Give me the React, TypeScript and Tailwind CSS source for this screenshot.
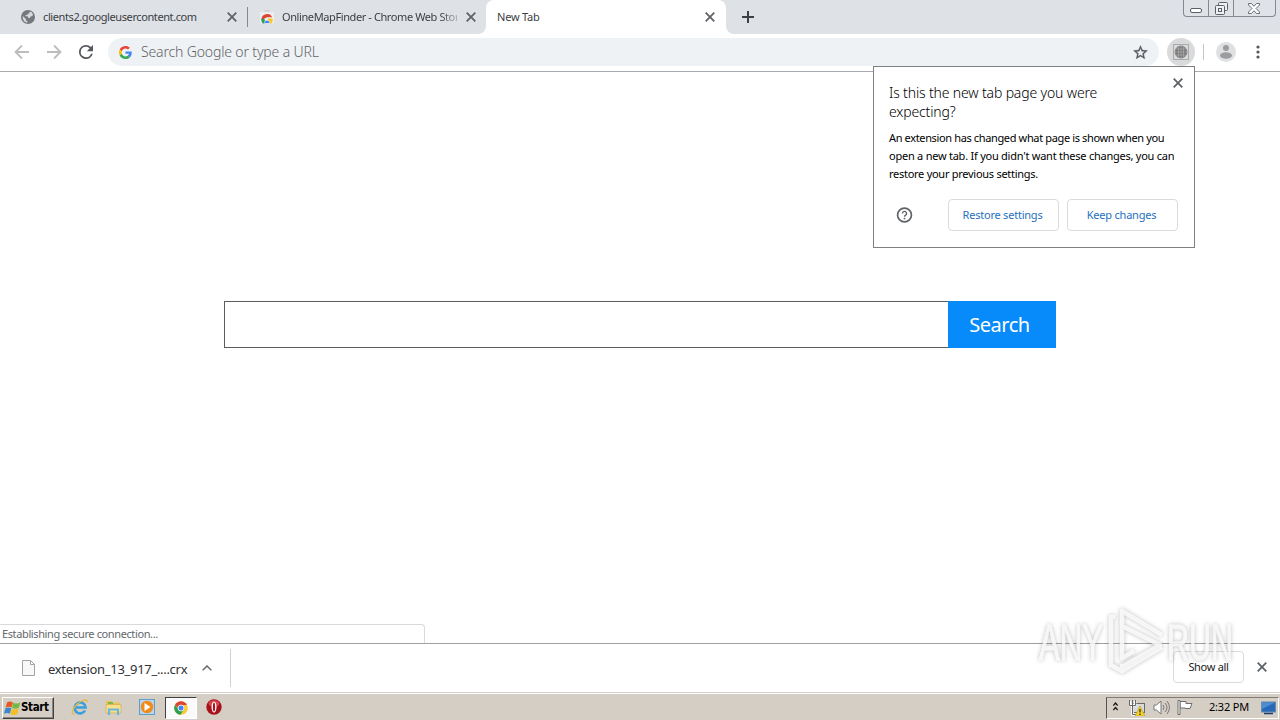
import type { ReactNode } from 'react';

const Cross = ({ className = '' }: { className?: string }) => (
  <svg viewBox="0 0 10 10" className={`h-[10px] w-[10px] shrink-0 ${className}`}>
    <path d="M.7.7l8.600 8.600M9.300.7L.7 9.300" stroke="currentColor" strokeWidth="1.8" fill="none" />
  </svg>
);

const GlobeIcon = () => (
  <svg viewBox="2 2 20 20" className="h-[14px] w-[14px] shrink-0">
    <circle cx="12" cy="12" r="10" fill="#75787c" />
    <path d="M4.500 10.500L9 15v1.500l2 1.500v2.300C7 19.500 4 16 4.500 10.500zM8.500 11V9h3V7h2.500V4.500l3 .5 2.500 4-3.500 2.500h-1v2h-2.500l-1-2.500z" fill="#d6d9de" />
  </svg>
);

const WebStoreIcon = () => (
  <svg viewBox="0 0 14 14" className="h-[14px] w-[14px] shrink-0">
    <path d="M5 2.500V.7h4v1.800" fill="none" stroke="#c9cbce" />
    <rect x="0" y="2" width="14" height="11.500" rx="1" fill="#eeeeee" />
    <path d="M1.500 10a5.600 5.600 0 0 1 10.700-2.700H7z" fill="#df4334" />
    <path d="M1.500 8.800c-.5 1.700.2 3.500 1.300 4.700h3L4.300 8.500z" fill="#2f9e50" />
    <path d="M8 8.500h4.500a5 5 0 0 1-1 5H8z" fill="#fbc526" />
    <path d="M4.500 13.500a2.600 2.600 0 1 1 5 0z" fill="#4285f4" stroke="#fff" strokeWidth=".6" />
  </svg>
);

const GoogleIcon = () => (
  <svg viewBox="0 0 48 48" className="h-[13px] w-[13px] shrink-0">
    <path fill="#EA4335" d="M24 9.5c3.54 0 6.71 1.22 9.21 3.6l6.85-6.85C35.9 2.38 30.47 0 24 0 14.62 0 6.51 5.38 2.56 13.22l7.98 6.19C12.43 13.72 17.74 9.5 24 9.5z" />
    <path fill="#4285F4" d="M46.98 24.55c0-1.57-.15-3.09-.38-4.55H24v9.02h12.94c-.58 2.96-2.26 5.48-4.78 7.18l7.73 6c4.51-4.18 7.09-10.36 7.09-17.65z" />
    <path fill="#FBBC05" d="M10.53 28.59c-.48-1.45-.76-2.99-.76-4.59s.27-3.14.76-4.59l-7.98-6.19C.92 16.46 0 20.12 0 24c0 3.88.92 7.54 2.56 10.78l7.97-6.19z" />
    <path fill="#34A853" d="M24 48c6.48 0 11.93-2.13 15.89-5.81l-7.73-6c-2.15 1.45-4.92 2.3-8.16 2.3-6.26 0-11.57-4.22-13.47-9.91l-7.98 6.19C6.51 42.62 14.62 48 24 48z" />
  </svg>
);

const TabStrip = () => (
  <div className="flex h-[34px] shrink-0 bg-[#dee1e6] text-[11px] text-[#3c4043]">
    <div className="flex w-[248px] items-center pl-[21px]">
      <GlobeIcon />
      <span className="ml-2 w-[184px] whitespace-nowrap tracking-[-0.4px]">clients2.googleusercontent.com</span>
      <Cross className="text-[#5f6368]" />
      <span className="ml-[10px] h-5 w-px shrink-0 bg-[#85888d]" />
    </div>
    <div className="flex w-[238px] items-center pl-3">
      <WebStoreIcon />
      <span className="ml-2 w-[175px] overflow-hidden whitespace-nowrap tracking-[-0.4px] [mask-image:linear-gradient(to_right,#000_158px,transparent_182px)]">
        OnlineMapFinder - Chrome Web Store
      </span>
      <Cross className="ml-[9px] text-[#5f6368]" />
    </div>
    <div className="relative flex w-[240px] items-center rounded-t-lg bg-white pl-[11px]">
      <svg viewBox="0 0 8 8" className="absolute bottom-0 -left-2 h-2 w-2"><path d="M8 0v8H0a8 8 0 0 0 8-8" fill="#fff" /></svg>
      <svg viewBox="0 0 8 8" className="absolute -right-2 bottom-0 h-2 w-2"><path d="M0 0v8h8a8 8 0 0 1-8-8" fill="#fff" /></svg>
      <span className="w-[208px] tracking-[-0.2px]">New Tab</span>
      <Cross className="text-[#5f6368]" />
    </div>
    <div className="flex flex-1 items-center pl-4">
      <svg viewBox="0 0 12 12" className="h-3 w-3"><path d="M6 0v12M0 6h12" stroke="#3c4043" strokeWidth="2" /></svg>
    </div>
    <div className="mr-1 flex h-[17px] w-[93px] rounded-b-[4px] border border-t-0 border-[#84888f] bg-[#dfe2e7]">
      <div className="flex w-[25px] items-end justify-center border-r border-[#84888f] pb-[3px]">
        <span className="h-[5px] w-3 rounded-[2px] border border-[#5c6066] bg-white" />
      </div>
      <div className="flex w-[25px] items-center justify-center border-r border-[#84888f]">
        <svg viewBox="0 0 13 13" className="h-[13px] w-[13px]" fill="#eef0f2" stroke="#5c6066">
          <rect x="3.500" y=".5" width="9" height="8" rx="1" />
          <rect x=".5" y="3.500" width="9" height="9" rx="1" />
          <rect x="3.500" y="6.500" width="3" height="3" />
        </svg>
      </div>
      <div className="flex flex-1 items-center justify-center pr-px">
        <svg viewBox="0 0 12 11" className="h-[11px] w-3">
          <path d="M.5.5h3L6 3.300 8.500.5h3v1.500L8 5.500l3.500 3.500v1.500h-3L6 7.700 3.500 10.500h-3V9L4 5.500.5 2z" fill="#fff" stroke="#5c6066" strokeWidth=".9" />
        </svg>
      </div>
    </div>
  </div>
);

const Toolbar = () => (
  <div className="flex h-[38px] shrink-0 items-center border-b border-[#a9abae] bg-white pb-px pl-[14px]">
    <svg viewBox="0 0 16 16" className="h-4 w-4" fill="none" stroke="#bbbdbf" strokeWidth="1.800"><path d="M15 8H2M8 1.500L1.500 8 8 14.500" /></svg>
    <svg viewBox="0 0 16 16" className="ml-4 h-4 w-4" fill="none" stroke="#bbbdbf" strokeWidth="1.800"><path d="M1 8h13M8 1.500L14.500 8 8 14.500" /></svg>
    <svg viewBox="4 4 16 16" className="ml-[17px] h-[14px] w-[14px]" fill="#54575b">
      <path d="M17.650 6.350A7.958 7.958 0 0 0 12 4a8 8 0 1 0 7.730 10h-2.080A6 6 0 1 1 12 6c1.660 0 3.140.69 4.220 1.780L13 11h7V4l-2.350 2.350z" />
    </svg>
    <div className="ml-[15px] flex h-7 w-[1051px] items-center rounded-full bg-[#eff2f5] pl-[11px]">
      <GoogleIcon />
      <span className="ml-[9px] flex-1 pb-px text-[14px] font-light tracking-[-0.15px] text-[#5f6367]">Search Google or type a URL</span>
      <svg viewBox="0 0 24 24" className="mr-[10px] h-[17px] w-[17px]" fill="#55585c">
        <path d="M22 9.240l-7.190-.62L12 2 9.190 8.630 2 9.240l5.460 4.730L5.820 21 12 17.270 18.180 21l-1.630-7.030L22 9.240zM12 15.400l-3.760 2.270 1-4.280-3.320-2.880 4.380-.38L12 6.100l1.710 4.040 4.380.38-3.320 2.880 1 4.280L12 15.400z" stroke="#55585c" strokeWidth=".4" />
      </svg>
    </div>
    <div className="ml-2 flex h-7 w-7 items-center justify-center rounded-full bg-[#d9dadb]">
      <svg viewBox="0 0 16 16" className="h-4 w-4" fill="none" stroke="#898989">
        <rect x=".5" y=".5" width="15" height="15" stroke="#aaa" />
        <circle cx="8" cy="8" r="6" fill="#777" />
        <path d="M2 8h12M8 2v12M3 5h10M3 11h10M5.500 3v10M10.500 3v10" stroke="#b5b5b5" strokeWidth=".6" />
      </svg>
    </div>
    <span className="ml-2 h-4 w-px bg-[#c4c6c9]" />
    <svg viewBox="0 0 20 20" className="ml-3 h-5 w-5">
      <circle cx="10" cy="10" r="10" fill="#dfe0e1" />
      <circle cx="10" cy="6" r="3" fill="#9a9c9f" />
      <ellipse cx="10" cy="13.500" rx="6" ry="3.200" fill="#9a9c9f" />
    </svg>
    <svg viewBox="0 0 4 14" className="ml-5 h-[14px] w-1" fill="#55585c">
      <circle cx="2" cy="2" r="1.600" /><circle cx="2" cy="7" r="1.600" /><circle cx="2" cy="12" r="1.600" />
    </svg>
  </div>
);

const DialogButton = ({ children }: { children: ReactNode }) => (
  <button className="h-8 w-[111px] rounded-[4px] border border-[#d9dbde] pr-[2px] text-[11px] tracking-[-0.22px] text-[#2670bd]">{children}</button>
);

const NewTabDialog = () => (
  <div className="absolute top-[66px] left-[873px] h-[182px] w-[322px] border border-[#7f8082] bg-white pt-4 pl-[15px] text-black">
    <Cross className="absolute top-[11px] right-[11px] text-[#5f6368]" />
    <h2 className="text-[14px] leading-[19px] font-light tracking-[-0.15px] whitespace-nowrap">
      Is this the new tab page you were
      <br />
      expecting?
    </h2>
    <p className="mt-2 text-[11px] leading-[18px] whitespace-nowrap">
      <span className="tracking-[-0.36px]">An extension has changed what page is shown when you</span>
      <br />
      <span className="tracking-[-0.24px]">open a new tab. If you didn't want these changes, you can</span>
      <br />
      <span className="tracking-[-0.27px]">restore your previous settings.</span>
    </p>
    <div className="mt-4 flex items-center">
      <svg viewBox="0 0 18 18" className="mr-[35px] mb-px ml-[7px] h-4 w-[17px]" fill="none" stroke="#5f6368">
        <circle cx="9" cy="9" r="7.800" strokeWidth="1.900" />
        <path d="M6.700 7.300a2.300 2.300 0 1 1 3.500 1.900C9.300 9.800 9 10 9 11" strokeWidth="1.500" />
        <path d="M9 12.200v1.700" strokeWidth="1.700" />
      </svg>
      <DialogButton>Restore settings</DialogButton>
      <span className="w-2" />
      <DialogButton>Keep changes</DialogButton>
    </div>
  </div>
);

const DownloadBar = () => (
  <div className="flex h-[49px] shrink-0 items-center border-t border-[#a0a0a0] bg-white">
    <div className="flex h-[38px] w-[231px] items-center border-r border-[#d0d1d3] pl-[22px]">
      <svg viewBox="0 0 13 16" className="mb-px h-4 w-[13px]" fill="#f8f8f8" stroke="#a3a3a3"><path d="M.5.5h8l4 4v11H.5zM8.500.5v4h4" /></svg>
      <span className="ml-[13px] w-[154px] pt-px text-[13px] leading-4 tracking-[-0.3px] whitespace-nowrap text-[#303134]">extension_13_917_....crx</span>
      <svg viewBox="0 0 10 6" className="h-[6px] w-[10px]" fill="none" stroke="#6d7074" strokeWidth="1.600"><path d="M.7 5.300L5 1l4.300 4.300" /></svg>
    </div>
    <button className="mb-[2px] ml-auto h-8 w-[71px] rounded-[4px] border border-[#d9dbde] bg-white text-[11px] tracking-[-0.3px] text-[#202124]">Show all</button>
    <Cross className="mr-[13px] mb-[2px] ml-[13px] text-[#5f6368]" />
  </div>
);

const Watermark = () => (
  <svg viewBox="0 0 200 76" className="pointer-events-none absolute top-[605px] left-[1036px] h-[76px] w-[200px] drop-shadow-[0_0_2px_rgba(0,0,0,0.32)]">
    <g fill="none" stroke="#fff" strokeWidth="4.500" strokeLinejoin="round" opacity=".8">
      <path d="M126 30L86 6v15L124 40 86 62v-3M86 21v32l12-7" />
      <path d="M79 12h-4v48l11 6 40-24" />
    </g>
    <g fontFamily="Liberation Sans, sans-serif" fontSize="50" fill="#fff" stroke="#fff" strokeWidth="1" opacity=".8">
      <text x="3" y="54.500" textLength="64" lengthAdjust="spacingAndGlyphs">ANY</text>
      <text x="131" y="54.500" textLength="66" lengthAdjust="spacingAndGlyphs">RUN</text>
    </g>
  </svg>
);

const WindowsFlag = () => (
  <svg viewBox="0 0 17 16" className="h-4 w-[17px]">
    <path d="M3 2.500c2-1.500 4-1 6 0L7.500 7.600C5.500 6.600 3.500 6.500 1.500 7.800z" fill="#e85a25" />
    <path d="M9.300 2.800c2 1 4.200 1 7-.3l-1.400 5.200c-2.200 1.300-4.500 1.200-6.900.2z" fill="#73b943" />
    <path d="M1.400 8.500c2-1.300 4-1.200 5.900-.2l-1.400 5.300c-1.800-1-3.900-1-6 .3z" fill="#3987cf" />
    <path d="M7.900 8.700c2 1 4.200 1 6.800-.2l-1.400 5.400c-2.200 1.300-4.500 1.300-6.900.3z" fill="#f5be22" />
  </svg>
);

const Taskbar = () => (
  <div className="flex h-7 shrink-0 items-center border-t border-[#d4d0c8] bg-[#d5cec5] pb-px pl-[2px] shadow-[inset_0_1px_0_#fff]">
    <div className="mt-[3px] flex h-[22px] w-[52px] items-center border border-t-white border-r-[#404040] border-b-[#404040] border-l-white pl-px shadow-[inset_-1px_-1px_0_#8b877f]">
      <WindowsFlag />
      <span className="text-[11.500px] font-bold tracking-[-0.35px] text-black [font-family:'DejaVu_Sans_Condensed','DejaVu_Sans',sans-serif]">Start</span>
    </div>
    {/* internet explorer */}
    <svg viewBox="0 0 18 18" className="mt-[2px] ml-[17px] h-[18px] w-[18px]" fill="none">
      <path d="M14 12.500A5.500 5.500 0 1 1 14.600 9.500H5" stroke="#3a9fdc" strokeWidth="2.600" />
      <path d="M3.500 15.500C0 17.500.5 12 5.500 6.800S17.500.3 15.800 4.500" stroke="#e5b840" strokeWidth="1.300" />
    </svg>
    {/* explorer */}
    <svg viewBox="0 0 17 16" className="mt-[2px] ml-4 h-4 w-[17px]">
      <path d="M1 2h6l1 1.500h7V14H1z" fill="#e8c45b" />
      <rect x="3" y="3" width="5" height="2" fill="#7fb648" />
      <path d="M1 5.500h15V14H1z" fill="#f7df8c" stroke="#d2ac4b" strokeWidth=".7" />
      <path d="M4 16v-5.500h9V16" fill="none" stroke="#6cb5dc" strokeWidth="2.200" />
    </svg>
    {/* media player */}
    <svg viewBox="0 0 16 16" className="mt-[2px] ml-[17px] h-4 w-4">
      <rect x=".5" y=".5" width="15" height="15" fill="#b5d6ee" stroke="#5f9ecb" />
      <circle cx="8" cy="8" r="6.200" fill="#f08a18" />
      <path d="M5.500 4v8l6-4z" fill="#fff" />
    </svg>
    <div className="mt-[3px] ml-[10px] flex h-[22px] w-8 items-center justify-center border border-t-[#404040] border-r-white border-b-white border-l-[#404040] bg-[#fafafa]">
      <svg viewBox="0 0 14 14" className="h-[14px] w-[14px]">
        <circle cx="7" cy="7" r="6.800" fill="#fcc934" />
        <path d="M1 3.700A7 7 0 0 1 13 3.700L7 4.500 5 8z" fill="#dc4437" />
        <path d="M1 3.700A6.900 6.900 0 0 0 6.500 13.800L9.500 9 4.600 8.500z" fill="#30a150" />
        <circle cx="7" cy="7" r="3" fill="#4286f5" stroke="#fff" strokeWidth=".8" />
      </svg>
    </div>
    <svg viewBox="0 0 16 16" className="mt-[2px] ml-[9px] h-4 w-4">
      <circle cx="8" cy="8" r="7.700" fill="#a8121a" />
      <ellipse cx="8" cy="4.500" rx="5.500" ry="3.300" fill="#d2474e" />
      <ellipse cx="8" cy="8" rx="2.500" ry="5.500" fill="#fff" />
      <ellipse cx="8" cy="8" rx="1.100" ry="4.500" fill="#b20f17" />
    </svg>
    <div className="mt-[3px] mr-px ml-auto flex h-[22px] w-[173px] items-center border border-t-[#807c75] border-r-white border-b-white border-l-[#55534f] pl-[6px]">
      <svg viewBox="0 0 5 9" className="mb-[2px] h-[9px] w-[5px]" fill="none" stroke="#111" strokeWidth="1.200"><path d="M.3 3.500L2.500 1l2.200 2.500M.3 8L2.500 5.500 4.700 8" /></svg>
      <svg viewBox="0 0 16 16" className="ml-[11px] h-4 w-4">
        <rect x="4.500" y="3.500" width="11" height="9" fill="#d8dadb" stroke="#696969" />
        <path d="M1 1v4h5V1M3.500 5v9.500H7" fill="none" stroke="#fff" strokeWidth="2.600" />
        <path d="M.5 0v5.500h6V0M3.500 0v14.500H7" fill="none" stroke="#666" />
        <path d="M11 6l5 10H6z" fill="#f4d527" stroke="#b59613" strokeWidth=".6" />
        <path d="M11 9v3.500M11 13.500V15" stroke="#222" strokeWidth="1.200" />
      </svg>
      <svg viewBox="0 0 17 15" className="ml-2 h-[15px] w-[17px]" fill="none" stroke="#777">
        <path d="M1 5h2.500L8 1v13l-4.500-4H1z" fill="#fff" />
        <path d="M10 5q2 2.500 0 5M12 3q4 4.500 0 9M14 1q5 6.500 0 13" />
      </svg>
      <svg viewBox="0 0 16 15" className="ml-[7px] h-[15px] w-4" fill="#fff" stroke="#6d6d6d">
        <path d="M3 1.500h6v2h6L13 8.500H8.500V8H3z" />
        <path d="M1 .5h2v14H1z" />
      </svg>
      <span className="ml-4 w-[52px] text-[11px] tracking-[-0.2px] whitespace-nowrap text-black">2:32 PM</span>
      <svg viewBox="0 0 15 14" className="h-[14px] w-[15px]">
        <rect x=".5" y="1" width="14" height="10" fill="#2669b9" stroke="#6c8aac" />
        <path d="M1 1.500h13L1 8z" fill="#4d8dd2" />
        <path d="M3 12.500h9" stroke="#1d3a70" strokeWidth="1.500" />
      </svg>
    </div>
  </div>
);

export default function App() {
  return (
    <div className="relative flex h-[720px] w-[1280px] flex-col overflow-hidden bg-white [font-family:'Noto_Sans','Open_Sans',sans-serif]">
      <TabStrip />
      <Toolbar />
      <main className="flex flex-1 flex-col">
        <div className="mt-[229px] ml-[224px] flex h-[47px] w-[832px]">
          <div className="flex-1 border border-r-0 border-[#5c5c5c]" />
          <button className="w-[108px] bg-[#078bfa] pr-[5px] text-[20px] tracking-[-0.5px] text-white">Search</button>
        </div>
        <div className="mt-auto h-[19px] w-[425px] rounded-tr-[4px] border-t border-r border-[#d8d9db] pl-[2px] text-[11px] leading-[18px] tracking-[-0.38px] text-[#65686c]">
          Establishing secure connection...
        </div>
      </main>
      <DownloadBar />
      <Taskbar />
      <NewTabDialog />
      <Watermark />
    </div>
  );
}
